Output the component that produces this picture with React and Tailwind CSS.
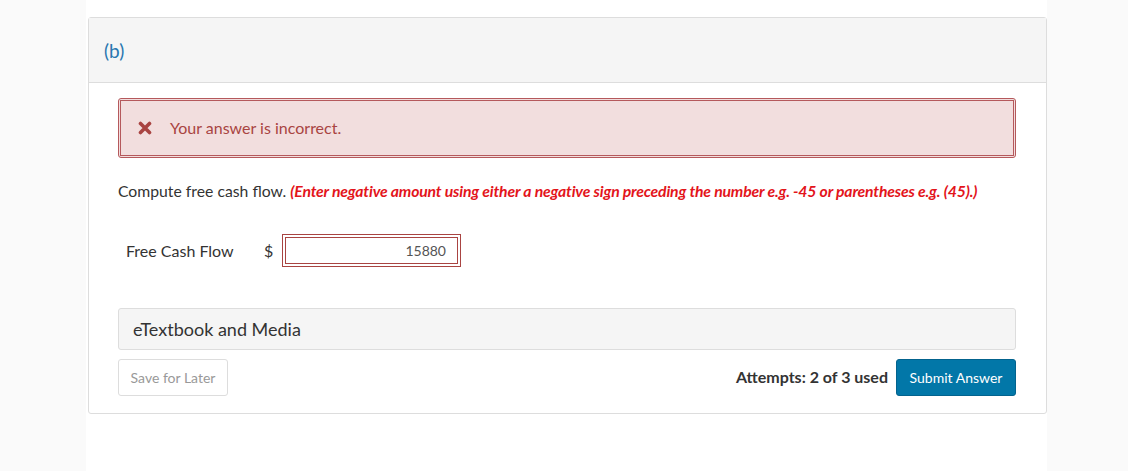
import React from 'react';

function TimesIcon() {
  return (
    <svg width="14" height="14" viewBox="0 0 14 14" className="shrink-0">
      <path d="M2.5 2.5 L11.5 11.5 M11.5 2.5 L2.5 11.5" stroke="#a94442" strokeWidth="3.6" strokeLinecap="round" />
    </svg>
  );
}

export default function App() {
  return (
    <div className="min-h-screen bg-[#fafafa]" style={{ fontFamily: 'Lato, "Open Sans", sans-serif' }}>
      <div className="ml-[86px] w-[961px] min-h-[471px] bg-white pt-[17px]">
        <div className="ml-[2px] w-[959px] border border-[#dddddd] rounded-[3px] bg-white">
          {/* Header */}
          <div className="h-[65px] bg-[#f5f5f5] border-b border-[#dddddd] flex items-center pl-[15px]">
            <span className="text-[19px] text-[#2a77b0] leading-none">(b)</span>
          </div>

          {/* Body */}
          <div className="pl-[29px] pr-[30px] pt-[15px] pb-[17px]">
            {/* Alert */}
            <div className="border border-[#b5595c] rounded-[3px] bg-[#f2dede] p-px">
              <div className="h-[56px] border border-[#b5595c] flex items-center pl-[17px] gap-[18px]">
                <TimesIcon />
                <span className="text-[16px] text-[#a94442]">Your answer is incorrect.</span>
              </div>
            </div>

            {/* Question */}
            <p className="mt-[23px] text-[15.75px] text-[#333333] leading-[20px] whitespace-nowrap">
              Compute free cash flow.{' '}
              <span className="font-bold italic text-[#e3141b] tracking-[-0.17px]">
                (Enter negative amount using either a negative sign preceding the number e.g. -45 or parentheses e.g. (45).)
              </span>
            </p>

            {/* Input row */}
            <div className="mt-[33px] flex items-center h-[33px]">
              <span className="ml-[8px] w-[138px] text-[16px] text-[#333333]">Free Cash Flow</span>
              <span className="w-[18px] text-[16px] text-[#333333]">$</span>
              <div className="w-[179px] h-[33px] border border-[#a94442] p-[2px]">
                <div className="h-full border border-[#a94442] flex items-center justify-end pr-[11px] text-[14px] text-[#555555]">
                  15880
                </div>
              </div>
            </div>

            {/* eTextbook */}
            <div className="mt-[41px] h-[42px] bg-[#f5f5f5] border border-[#dddddd] rounded-[3px] flex items-center pl-[14px]">
              <span className="text-[18px] text-[#333333]">eTextbook and Media</span>
            </div>

            {/* Actions */}
            <div className="mt-[9px] flex items-center">
              <button className="h-[37px] w-[110px] border border-[#dddddd] rounded-[3px] bg-white text-[14px] text-[#999999]">
                Save for Later
              </button>
              <div className="ml-auto flex items-center">
                <span className="text-[16px] font-bold text-[#333333] -mt-[2px]">Attempts: 2 of 3 used</span>
                <button className="ml-[8px] h-[37px] w-[120px] rounded-[3px] bg-[#0277a8] border border-[#03638e] text-[14px] text-white">
                  Submit Answer
                </button>
              </div>
            </div>
          </div>
        </div>
      </div>
    </div>
  );
}
